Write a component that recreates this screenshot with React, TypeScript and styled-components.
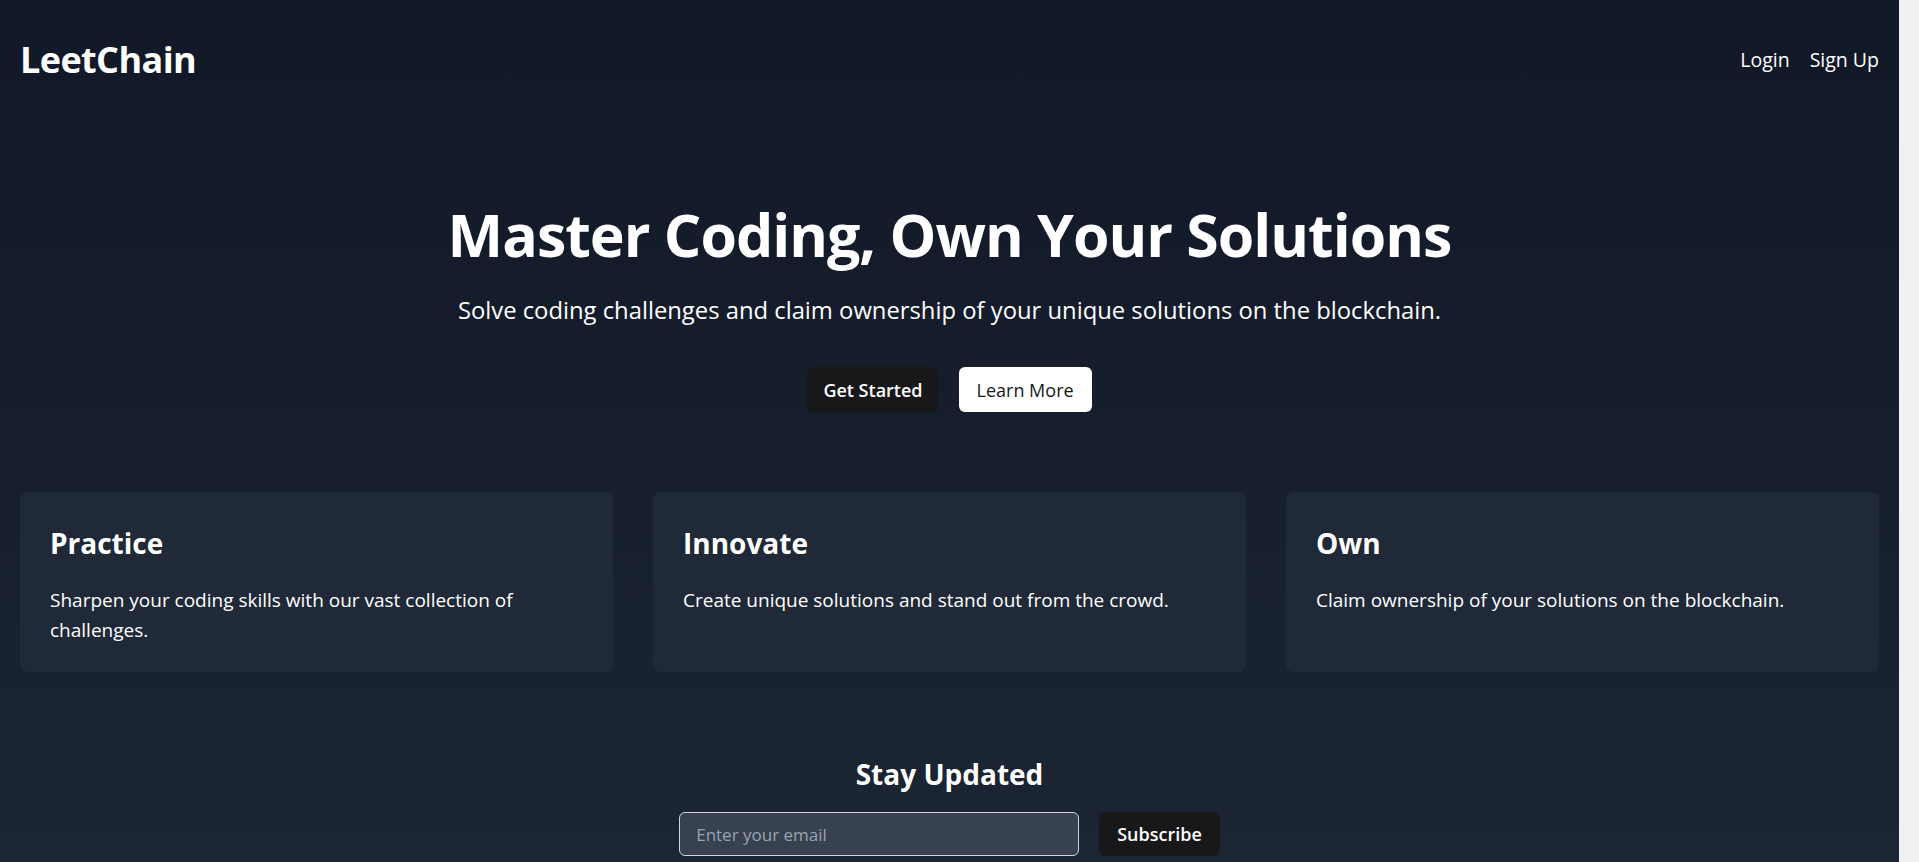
import styled, { createGlobalStyle } from "styled-components";

const GlobalStyle = createGlobalStyle`
  html, body {
    margin: 0;
    padding: 0;
  }
  body {
    font-family: "Open Sans", "Noto Sans", sans-serif;
    color: #ffffff;
    background: #f1f1f1;
  }
  * {
    box-sizing: border-box;
  }
`;

const features = [
  {
    title: "Practice",
    text: "Sharpen your coding skills with our vast collection of challenges.",
  },
  {
    title: "Innovate",
    text: "Create unique solutions and stand out from the crowd.",
  },
  {
    title: "Own",
    text: "Claim ownership of your solutions on the blockchain.",
  },
];

function App() {
  return (
    <Page>
      <GlobalStyle />
      <Header>
        <Logo>LeetChain</Logo>
        <Nav>
          <NavLink href="#">Login</NavLink>
          <NavLink href="#">Sign Up</NavLink>
        </Nav>
      </Header>

      <Hero>
        <Title>Master Coding, Own Your Solutions</Title>
        <Subtitle>
          Solve coding challenges and claim ownership of your unique solutions on the blockchain.
        </Subtitle>
        <Actions>
          <Button>Get Started</Button>
          <Button $light>Learn More</Button>
        </Actions>
      </Hero>

      <Features>
        {features.map((f) => (
          <Card key={f.title}>
            <CardTitle>{f.title}</CardTitle>
            <CardText>{f.text}</CardText>
          </Card>
        ))}
      </Features>

      <Newsletter>
        <NewsTitle>Stay Updated</NewsTitle>
        <NewsForm onSubmit={(e) => e.preventDefault()}>
          <EmailInput type="email" placeholder="Enter your email" />
          <SubscribeButton type="submit">Subscribe</SubscribeButton>
        </NewsForm>
      </Newsletter>

      <Footer>© 2024 LeetChain. All rights reserved.</Footer>
    </Page>
  );
}

export default App;

// the reference viewport keeps a 20px scrollbar gutter on the right
const Page = styled.div`
  min-height: 1120px;
  margin-right: 20px;
  background: linear-gradient(to bottom, #111827 0%, #1f2937 100%);
  display: flex;
  flex-direction: column;
`;

const Header = styled.header`
  display: flex;
  justify-content: space-between;
  align-items: center;
  padding: 36px 20px 0;
`;

const Logo = styled.div`
  font-size: 36px;
  font-weight: 700;
  line-height: 48px;
  letter-spacing: -0.6px;
`;

const Nav = styled.nav`
  display: flex;
  gap: 20px;
`;

const NavLink = styled.a`
  color: #ffffff;
  text-decoration: none;
  font-size: 19.5px;
  line-height: 28px;
`;

const Hero = styled.section`
  display: flex;
  flex-direction: column;
  align-items: center;
  text-align: center;
  margin-top: 114px;
`;

const Title = styled.h1`
  margin: 0;
  font-size: 59px;
  font-weight: 700;
  line-height: 72px;
  letter-spacing: -1px;
`;

const Subtitle = styled.p`
  margin: 24px 0 0;
  font-size: 23.8px;
  line-height: 32px;
`;

const Actions = styled.div`
  display: flex;
  gap: 20px;
  margin-top: 41px;
`;

const Button = styled.button<{ $light?: boolean }>`
  height: 45px;
  padding: 0 ${(p) => (p.$light ? 18 : 16)}px;
  border: none;
  border-radius: 6px;
  font-family: inherit;
  font-size: 18px;
  font-weight: ${(p) => (p.$light ? 500 : 600)};
  background: ${(p) => (p.$light ? "#ffffff" : "#18181b")};
  color: ${(p) => (p.$light ? "#18181b" : "#ffffff")};
  cursor: pointer;
`;

const Features = styled.section`
  display: grid;
  grid-template-columns: repeat(3, 1fr);
  gap: 40px;
  padding: 0 20px;
  margin-top: 80px;
`;

const Card = styled.div`
  background: #1f2937;
  border-radius: 8px;
  padding: 33px 30px 27px;
  min-height: 180px;
`;

const CardTitle = styled.h3`
  margin: 0 0 24px;
  font-size: 28px;
  font-weight: 700;
  line-height: 36px;
`;

const CardText = styled.p`
  margin: 0;
  font-size: 19px;
  line-height: 30px;
`;

const Newsletter = styled.section`
  display: flex;
  flex-direction: column;
  align-items: center;
  margin-top: 84px;
`;

const NewsTitle = styled.h2`
  margin: 0;
  font-size: 28px;
  font-weight: 700;
  line-height: 36px;
`;

const NewsForm = styled.form`
  display: flex;
  gap: 20px;
  margin-top: 20px;
`;

const EmailInput = styled.input`
  width: 400px;
  height: 44px;
  padding: 0 16px;
  background: #374151;
  border: 1px solid #d1d5db;
  border-radius: 6px;
  color: #ffffff;
  font-family: inherit;
  font-size: 17px;
  outline: none;

  &::placeholder {
    color: #9ca3af;
  }
`;

const SubscribeButton = styled.button`
  height: 44px;
  padding: 0 18px;
  border: none;
  border-radius: 6px;
  background: #18181b;
  color: #ffffff;
  font-family: inherit;
  font-size: 18px;
  font-weight: 600;
  cursor: pointer;
`;

const Footer = styled.footer`
  margin-top: auto;
  padding: 40px 20px;
  text-align: center;
  font-size: 16px;
  color: #9ca3af;
`;
